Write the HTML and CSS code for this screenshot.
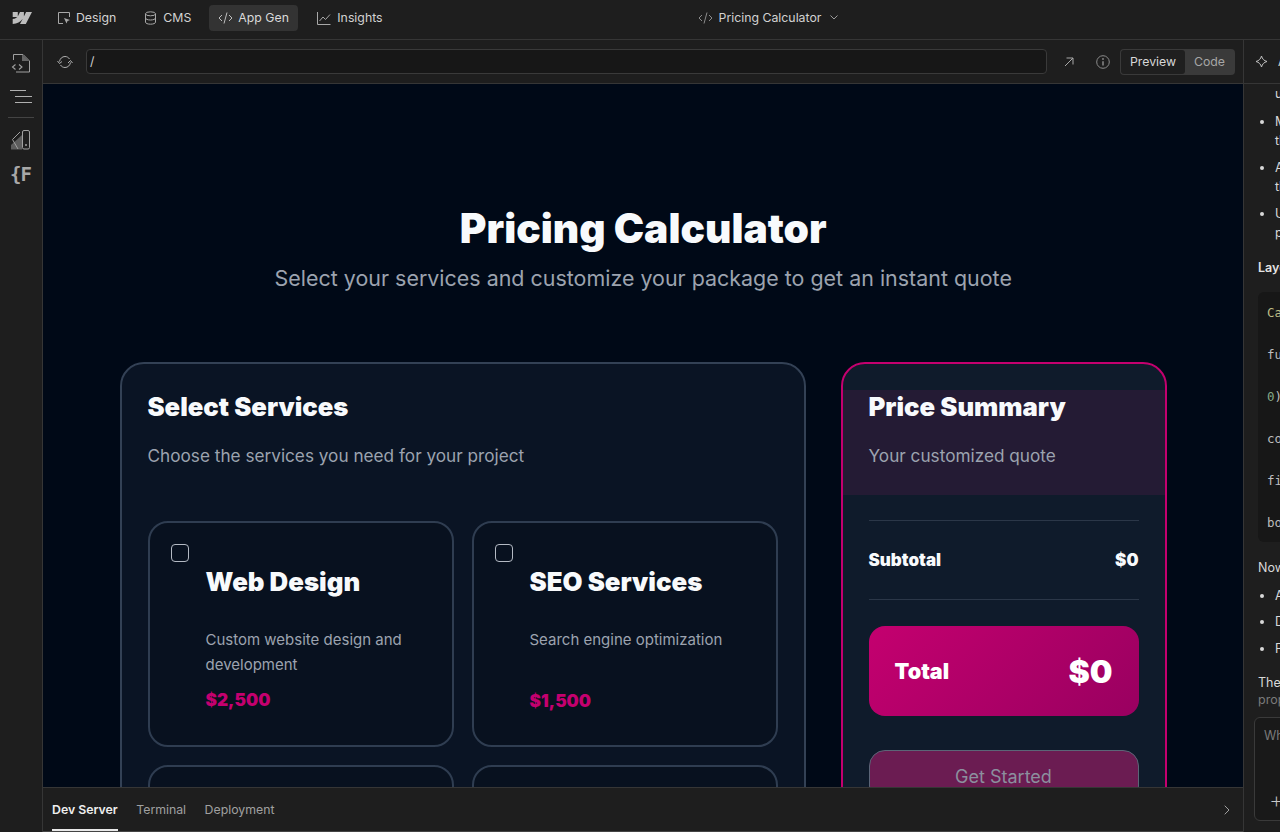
FILE: index.html
```html
<!DOCTYPE html>
<html lang="en">
<head>
<meta charset="utf-8">
<title>Pricing Calculator</title>
<link rel="stylesheet" href="styles.css">
</head>
<body>
<div class="app">
  <header class="topbar">
    <svg class="logo" width="20" height="12" viewBox="0 0 20 12"><path d="M20 0l-6.200 12H8l2.600-5h-.1C8.400 9.800 5.200 11.600.7 12V7.100s2.900-.2 4.600-2H.7V.1h5.100v4.200h.1L8 .1h3.900v4.100h.1L14.100 0H20z" fill="#bdbdbd"/></svg>
    <nav class="nav">
      <a class="nav-item nav-design"><svg width="14" height="14" viewBox="0 0 14 14" fill="none" stroke="#a8a8a8"><path d="M6 12.500H1.500V1.500h11V6"/><path d="M7 7l6 2-2.500 1-1 2.500z" fill="#a8a8a8" stroke="none"/></svg>Design</a>
      <a class="nav-item nav-cms"><svg width="13" height="14" viewBox="0 0 13 14" fill="none" stroke="#a8a8a8"><ellipse cx="6.500" cy="2.800" rx="5" ry="2"/><path d="M1.500 2.800v8.400c0 1.100 2.200 2 5 2s5-.9 5-2V2.800M1.500 7c0 1.100 2.200 2 5 2s5-.9 5-2"/></svg>CMS</a>
      <a class="nav-item nav-app"><svg width="15" height="14" viewBox="0 0 15 14" fill="none" stroke="#bdbdbd"><path d="M4 4L1 7l3 3M11 4l3 3-3 3M9 1.500L6 12.500"/></svg>App Gen</a>
      <a class="nav-item nav-insights"><svg width="14" height="14" viewBox="0 0 14 14" fill="none" stroke="#a8a8a8"><path d="M.5 1v12.500H13.500"/><path d="M2.500 10l3.500-4 2.500 2.500 4.500-5"/></svg>Insights</a>
    </nav>
    <div class="page-title"><svg width="15" height="14" viewBox="0 0 15 14" fill="none" stroke="#8a8a8a"><path d="M4 4L1 7l3 3M11 4l3 3-3 3M9 1.500L6 12.500"/></svg><span>Pricing Calculator</span><svg class="chev" width="8" height="5" viewBox="0 0 8 5" fill="none" stroke="#9a9a9a"><path d="M.5.500L4 4 7.500.500"/></svg></div>
  </header>
  <div class="workspace">
    <aside class="rail">
      <svg class="rail-file" width="20" height="20" viewBox="0 0 20 20" fill="none" stroke="#a0a0a0"><path d="M2.500 7V1.500h9.500l6.500 6.500v11H5"/><path d="M11 1.500V8h7z" fill="#666" stroke="none"/><path d="M4.500 11.500L1.500 14l3 2.500M8 11.500l3 2.500-3 2.500" stroke-width="1.100"/></svg>
      <svg class="rail-nav" width="22" height="14" viewBox="0 0 22 14" fill="none" stroke="#b0b0b0"><path d="M0 1.500h16M5 7.500h17M5 13.500h17"/></svg>
      <div class="rail-sep"></div>
      <svg class="rail-swatch" width="20" height="20" viewBox="0 0 20 20" fill="none" stroke="#a0a0a0"><path d="M0 19.500V15l11-10v14.500z" fill="#5d5d5d" stroke="none"/><path d="M1.500 9.500l7.500-7.500M1.500 9.500l5.500 9.500"/><rect x="11.500" y=".5" width="7" height="18.500" rx="1.500"/><circle cx="15" cy="15" r="1" fill="#a0a0a0" stroke="none"/></svg>
      <span class="rail-f">{F</span>
    </aside>
    <main class="main">
      <div class="toolbar">
        <svg width="16" height="14" viewBox="0 0 16 14" fill="none" stroke="#b0b0b0"><path d="M2.500 6.500C3 3.500 5.200 1.500 8 1.500c1.900 0 3.500.9 4.500 2.500M13.500 7.500c-.5 3-2.700 5-5.500 5-1.900 0-3.500-.9-4.500-2.500"/><path d="M.5 4.500l2 2.500 2.500-2M11 6.500l2.500-2.500 2 2.500" transform="translate(0 1.500)"/></svg>
        <div class="url">/</div>
        <svg class="ext" width="10" height="10" viewBox="0 0 10 10" fill="none" stroke="#a8a8a8"><path d="M1 9L9 1M2.500 1H9v6.500"/></svg>
        <svg class="info" width="14" height="14" viewBox="0 0 14 14" fill="none" stroke="#8a8a8a"><circle cx="7" cy="7" r="6.300"/><path d="M7 6.200v4.300" stroke-width="1.500"/><circle cx="7" cy="4" r=".9" fill="#8a8a8a" stroke="none"/></svg>
        <div class="segment"><span class="seg seg-on">Preview</span><span class="seg seg-off">Code</span></div>
      </div>
      <div class="preview">
        <h1 class="hero-title">Pricing Calculator</h1>
        <p class="hero-sub">Select your services and customize your package to get an instant quote</p>
        <div class="layout">
          <section class="panel-card services">
            <div class="card-head">
              <h2>Select Services</h2>
              <p>Choose the services you need for your project</p>
            </div>
            <div class="service-grid">
              <div class="service">
                <span class="check"></span>
                <div class="service-body"><h3>Web Design</h3><p>Custom website design and development</p><strong>$2,500</strong></div>
              </div>
              <div class="service">
                <span class="check"></span>
                <div class="service-body"><h3>SEO Services</h3><p class="one-line">Search engine optimization</p><strong>$1,500</strong></div>
              </div>
              <div class="service"></div>
              <div class="service"></div>
            </div>
          </section>
          <section class="panel-card summary">
            <div class="card-head band">
              <h2>Price Summary</h2>
              <p>Your customized quote</p>
            </div>
            <div class="row"><span>Subtotal</span><span>$0</span></div>
            <div class="total"><span>Total</span><span class="total-num">$0</span></div>
            <div class="cta">Get Started</div>
          </section>
        </div>
      </div>
      <div class="tabs">
        <span class="tab tab-on">Dev Server</span>
        <span class="tab">Terminal</span>
        <span class="tab">Deployment</span>
        <svg class="tabs-chev" width="6" height="10" viewBox="0 0 6 10" fill="none" stroke="#a0a0a0"><path d="M.7.700L5 5 .7 9.300"/></svg>
      </div>
    </main>
    <aside class="chat">
      <div class="chat-head"><svg width="13" height="13" viewBox="0 0 13 13" fill="none" stroke="#c0c0c0"><path d="M6.500 1C7.300 4 9 5.700 12 6.500 9 7.300 7.300 9 6.500 12 5.700 9 4 7.300 1 6.500 4 5.700 5.700 4 6.500 1z"/></svg><span>Assistant</span></div>
      <div class="chat-body">
        <div class="line">use semantic markup</div>
        <ul class="bullets">
          <li><span>Mobile-first grid that stacks</span><span>the summary below the list</span></li>
          <li><span>Accessible checkbox labels</span><span>that toggle each service</span></li>
          <li><span>Uses the brand palette and</span><span>pink accent colours</span></li>
        </ul>
        <div class="chat-h">Layout</div>
        <pre class="code"><span class="c-y">Calculator</span>

function App

<span class="c-g">0</span>);

const total

fixed

border</pre>
        <div class="line now">Now you can:</div>
        <ul class="bullets tight">
          <li>Add services</li>
          <li>Drag the slider</li>
          <li>Preview the total</li>
        </ul>
        <div class="line the">The app is ready</div>
        <div class="line prop">proposed changes</div>
        <div class="prompt"><span class="prompt-text">What would you like to change?</span><span class="prompt-plus">+</span></div>
      </div>
    </aside>
  </div>
</div>
</body>
</html>
```
FILE: styles.css
```css
* { box-sizing: border-box; }
html, body { margin: 0; height: 100%; overflow: hidden; }
body { background: #1e1e1e; font-family: Inter, "Liberation Sans", sans-serif; color: #d9d9d9; }
h1, h2, h3, p, ul, pre { margin: 0; padding: 0; }
svg { display: block; flex: none; }

.app { width: 1280px; height: 832px; display: flex; flex-direction: column; overflow: hidden; }

.topbar { height: 40px; flex: none; display: flex; align-items: center; padding: 0 0 4px 12px; border-bottom: 1px solid #363636; background: #1e1e1e; }
.logo { margin-right: 15px; }
.nav { display: flex; align-items: center; font-size: 12.300px; }
.nav-item { display: flex; align-items: center; gap: 5px; height: 26px; color: #d2d2d2; }
.nav-design { margin-left: 10px; }
.nav-cms { margin-left: 28px; gap: 6px; }
.nav-app { margin-left: 18px; width: 89px; padding-left: 9px; gap: 5px; background: #333333; border-radius: 4px; color: #dadada; }
.nav-insights { margin-left: 19px; gap: 6px; }
.page-title { display: flex; align-items: center; margin-left: 315px; font-size: 12.300px; color: #d2d2d2; }
.page-title span { margin-left: 6px; }
.chev { margin-left: 9px; }

.workspace { flex: 1; display: flex; min-height: 0; }

.rail { width: 43px; flex: none; border-right: 1px solid #363636; display: flex; flex-direction: column; align-items: center; padding-top: 13px; padding-right: 1px; }
.rail-nav { margin-top: 16px; }
.rail-sep { width: 26px; height: 1px; background: #444; margin-top: 14px; }
.rail-swatch { margin-top: 12px; }
.rail-f { margin-top: 12px; font: 700 19px/24px "DejaVu Sans Mono", monospace; color: #a8a8a8; letter-spacing: -1px; }

.main { width: 1201px; flex: none; display: flex; flex-direction: column; min-height: 0; border-right: 1px solid #363636; }

.toolbar { height: 44px; flex: none; display: flex; align-items: center; padding-left: 14px; border-bottom: 1px solid #363636; }
.url { width: 961px; height: 25px; margin-left: 13px; padding-left: 3px; border: 1px solid #3a3a3a; border-radius: 4px; background: #171717; font-size: 12.300px; line-height: 23px; color: #cfcfcf; }
.ext { margin-left: 17px; }
.info { margin-left: 22px; }
.segment { display: flex; margin-left: 10px; width: 115px; height: 26px; background: #3a3a3a; border-radius: 4px; padding: 1px; font-size: 12.300px; line-height: 24px; }
.seg { text-align: center; }
.seg-on { width: 64px; background: #1f1f1f; border-radius: 3px; color: #d8d8d8; }
.seg-off { flex: 1; color: #a6a6a6; }

.preview { flex: 1; min-height: 0; overflow: hidden; background: #000917; padding: 120px 76px 0 76.500px; }
.hero-title { font-size: 40.700px; line-height: 50px; font-weight: 900; color: #f8fafc; text-align: center; }
.hero-sub { margin-top: 10px; font-size: 21.450px; line-height: 28px; color: #9ca3af; text-align: center; }
.layout { margin-top: 70px; display: grid; grid-template-columns: 686px 326px; gap: 35px; align-items: start; }

.panel-card { border: 2px solid #334155; border-radius: 24px; padding: 26px; background: #0a1424; }
.card-head h2 { font-size: 25.700px; line-height: 33px; font-weight: 900; color: #f8fafc; }
.card-head p { margin-top: 19px; font-size: 17.200px; line-height: 28px; color: #9ca3af; }

.service-grid { margin-top: 51px; display: grid; grid-template-columns: 306px 306px; gap: 18px; }
.service { min-height: 226px; border: 2px solid #2f3d51; border-radius: 20px; background: #08111f; padding: 21px; display: flex; gap: 17px; align-items: flex-start; }
.check { width: 18px; height: 18px; flex: none; border: 1px solid #b4bac4; border-radius: 4px; }
.service-body { margin-top: 23px; }
.service h3 { font-size: 25.800px; line-height: 30px; font-weight: 900; color: #f8fafc; }
.service p { margin-top: 31px; font-size: 15px; line-height: 24.500px; color: #9ca3af; }
.service p.one-line { margin-bottom: 36px; }
.service strong { display: block; margin-top: 11px; font-size: 17.200px; line-height: 24px; font-weight: 900; color: #c4006f; }

.summary { border-color: #c4006f; background: #0f1b2b; }
.band { margin: 0 -26px; padding: 0 26px 25px; background: #241b34; }
.row { margin-top: 25px; height: 80px; display: flex; align-items: center; justify-content: space-between; border-top: 1px solid #2b3748; border-bottom: 1px solid #2b3748; font-size: 17px; font-weight: 900; color: #f8fafc; }
.total { margin-top: 26px; height: 90px; padding: 0 26px; display: flex; align-items: center; justify-content: space-between; border-radius: 16px; background: linear-gradient(135deg, #c4006f, #990060); color: #fff; font-size: 21.600px; font-weight: 900; }
.total-num { font-size: 32px; }
.cta { margin-top: 34px; height: 52px; border: 1px solid #5b6577; border-radius: 16px; background: #6b1c52; color: #8c8f9e; font-size: 18px; line-height: 52px; text-align: center; }

.tabs { height: 45px; flex: none; display: flex; align-items: stretch; padding-left: 9px; border-top: 1px solid #363636; border-bottom: 1px solid #444; background: #1e1e1e; font-size: 12.300px; line-height: 43px; color: #a0a0a0; }
.tab { margin-right: 18.500px; }
.tab-on { font-weight: 600; color: #eeeeee; box-shadow: inset 0 -2px 0 #e8e8e8; }
.tabs-chev { margin-left: auto; margin-right: 13px; align-self: center; }

.chat { flex: 1; min-width: 0; overflow: hidden; }
.chat-head { height: 44px; width: 300px; display: flex; align-items: center; gap: 10px; padding-left: 11px; border-bottom: 1px solid #363636; font-size: 12.500px; color: #d0d0d0; }
.chat-body { width: 300px; padding: 0 0 0 14px; font-size: 12.500px; line-height: 19.500px; color: #d8d8d8; white-space: nowrap; }
.line { padding-left: 17px; }
.bullets { margin-top: 8px; padding-left: 17px; }
.bullets li { margin-bottom: 7px; }
.bullets li span { display: block; }
.chat-h { margin-top: 15px; font-weight: 600; color: #e4e4e4; }
.code { margin-top: 15px; width: 280px; height: 250px; padding: 10px 0 0 9px; background: #171717; border-radius: 6px; font: 12.500px/21px "DejaVu Sans Mono", monospace; color: #bdbdbd; }
.c-y { color: #bdbd85; }
.c-g { color: #86a886; }
.now { margin-top: 16px; padding-left: 0; }
.tight { margin-top: 8px; }
.the { margin-top: 16px; padding-left: 0; line-height: 17px; }
.prop { padding-left: 0; line-height: 17px; color: #7a7a7a; }
.prompt { margin: 9px 0 0 -4px; width: 280px; height: 104px; border: 1px solid #3a3a3a; border-radius: 6px; background: #191919; padding: 8px 0 0 9px; display: flex; flex-direction: column; color: #7a7a7a; }
.prompt-plus { margin-top: 42px; padding-left: 5px; font-size: 23px; line-height: 24px; font-weight: 200; color: #c8c8c8; }
```
